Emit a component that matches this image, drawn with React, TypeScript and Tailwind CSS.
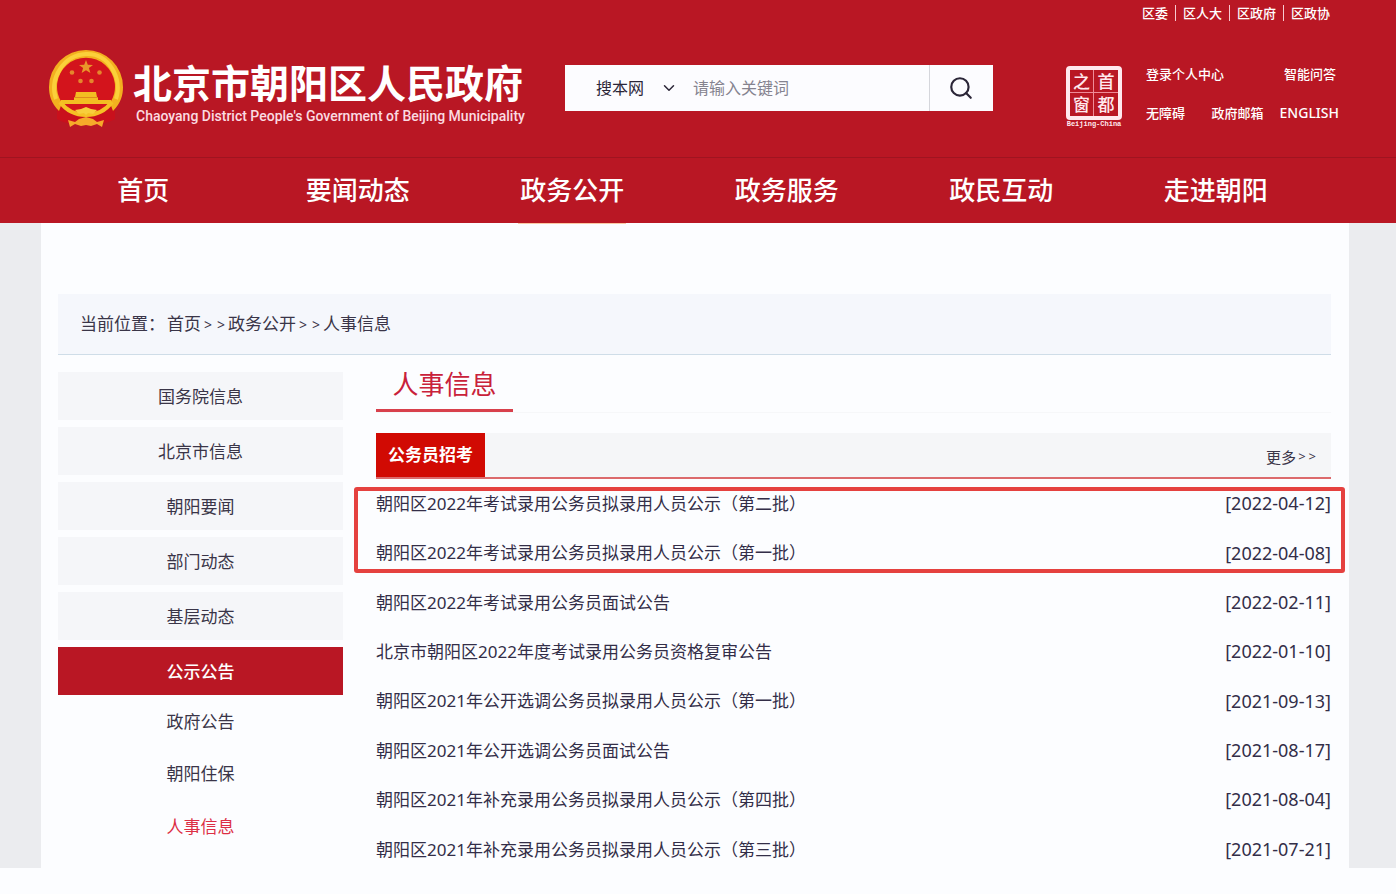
import React from "react";
import { ChevronDown, Search } from "lucide-react";

const topLinks = ["区委", "区人大", "区政府", "区政协"];
const navItems = ["首页", "要闻动态", "政务公开", "政务服务", "政民互动", "走进朝阳"];
const activeNav = "政务公开";
const sideItems = ["国务院信息", "北京市信息", "朝阳要闻", "部门动态", "基层动态", "公示公告"];
const activeSide = "公示公告";
const subItems = ["政府公告", "朝阳住保", "人事信息"];
const activeSub = "人事信息";

const notices = [
  { title: "朝阳区2022年考试录用公务员拟录用人员公示（第二批）", date: "2022-04-12" },
  { title: "朝阳区2022年考试录用公务员拟录用人员公示（第一批）", date: "2022-04-08" },
  { title: "朝阳区2022年考试录用公务员面试公告", date: "2022-02-11" },
  { title: "北京市朝阳区2022年度考试录用公务员资格复审公告", date: "2022-01-10" },
  { title: "朝阳区2021年公开选调公务员拟录用人员公示（第一批）", date: "2021-09-13" },
  { title: "朝阳区2021年公开选调公务员面试公告", date: "2021-08-17" },
  { title: "朝阳区2021年补充录用公务员拟录用人员公示（第四批）", date: "2021-08-04" },
  { title: "朝阳区2021年补充录用公务员拟录用人员公示（第三批）", date: "2021-07-21" },
];

function Emblem() {
  return (
    <svg viewBox="0 0 76 80" className="h-20 w-[76px] shrink-0" aria-hidden="true">
      <path d="M9 52h58v18q-8 5-16 4H25q-8 1-16-4z" fill="#c9101c" />
      <circle cx="38" cy="37" r="31" fill="#d3141c" />
      <path
        d="M11 62C3 54 1 46 1 38a37 37 0 0 1 74 0c0 8-2 16-10 24l-3-8a29 29 0 1 0-48 0z"
        fill="#f3b01f"
      />
      <path d="M8 50C1 30 15 6 38 5s37 25 30 45" fill="none" stroke="#fbd03a" strokeWidth="4" />
      <path
        d="m38 11 1.800 4.800 5.200.2-4.100 3.100 1.500 5-4.400-2.900-4.400 2.900 1.500-5-4.100-3.100 5.200-.2z"
        fill="#e9962a"
      />
      <g fill="#e5862c">
        <circle cx="24" cy="23.500" r="2.300" />
        <circle cx="51.500" cy="23.500" r="2.300" />
        <circle cx="32.500" cy="32" r="2.300" />
        <circle cx="43.500" cy="32" r="2.300" />
      </g>
      <path d="M28 43h20l1 5h1v3h13v4H13v-4h13v-3h1z" fill="#f3bd22" />
      <path d="M26 48.500h24" stroke="#e08a1c" strokeWidth="1" />
      <path d="M12 53c6 8 14 13 26 13s20-5 26-13" fill="none" stroke="#f6bf25" strokeWidth="4" />
      <path d="m27 61 6-1 5-2 5 2 6 1-4 4-5-1-2 2-2-2-5 1z" fill="#f8ce3c" />
      <path
        d="m20 71 7 2 4-3 7-2 7 2 4 3 7-2-2 7-5-3-6 2-5-1-5 1-6-2-5 3z"
        fill="#f6a92a"
      />
    </svg>
  );
}

function CapitalSeal() {
  return (
    <a href="#seal" className="flex w-[58px] flex-col items-center text-[#ffe9ee]">
      <span className="grid h-[54px] w-[56px] grid-cols-2 grid-rows-2 rounded-[4px] border-4 border-[#ffe9ee] text-[17px] leading-none font-medium">
        <span className="flex items-center justify-center border-r border-b border-[#ef8b98]">之</span>
        <span className="flex items-center justify-center border-b border-[#ef8b98]">首</span>
        <span className="flex items-center justify-center border-r border-[#ef8b98]">窗</span>
        <span className="flex items-center justify-center">都</span>
      </span>
      <span className="font-['Liberation_Mono',monospace] text-[7px] leading-[8px] font-bold">Beijing-China</span>
    </a>
  );
}

function Header() {
  return (
    <header className="bg-[#b91724] text-white">
      <div className="flex h-[26px] justify-end pr-[66px] text-[13px] leading-[26px] font-medium">
        <div className="flex items-center">
          {topLinks.map((label, i) => (
            <React.Fragment key={label}>
              {i > 0 && <span className="mx-[7px] h-4 w-px bg-[#f7c9d0]" />}
              <a href="#dept">{label}</a>
            </React.Fragment>
          ))}
        </div>
      </div>

      <div className="flex h-[131px] items-start justify-between pr-[57px] pl-12">
        <div className="flex items-start gap-10">
          <a href="#home" className="flex pt-[23px]">
            <Emblem />
            <span className="ml-[9px] flex flex-col pt-[11px]">
              <span className="text-[39px] leading-[46px] font-bold whitespace-nowrap">北京市朝阳区人民政府</span>
              <span className="pl-[3px] font-[Roboto,sans-serif] text-[14px] leading-[20px] font-medium whitespace-nowrap text-[#fbdbe1]">
                Chaoyang District People's Government of Beijing Municipality
              </span>
            </span>
          </a>

          <form
            className="mt-[39px] flex h-[46px] w-[428px] shrink-0 bg-[#fcfcff] text-[#2b2638]"
            onSubmit={(e) => e.preventDefault()}
          >
            <div className="relative flex items-center">
              <select
                aria-label="搜索范围"
                className="h-full w-[128px] appearance-none bg-transparent pl-[31px] text-[16px] outline-none"
              >
                <option>搜本网</option>
              </select>
              <ChevronDown className="pointer-events-none absolute right-[15px] size-[18px]" strokeWidth={2} />
            </div>
            <input
              type="text"
              aria-label="关键词"
              placeholder="请输入关键词"
              className="min-w-0 flex-1 bg-transparent text-[16px] outline-none placeholder:text-[#85838f]"
            />
            <button
              type="submit"
              aria-label="搜索"
              className="flex w-16 items-center justify-center border-l border-[#d5d6dc]"
            >
              <Search className="size-[26px]" strokeWidth={2} />
            </button>
          </form>
        </div>

        <div className="flex items-start gap-[23px] pt-10">
          <CapitalSeal />
          <div className="-mt-0.5 flex w-[193px] flex-col gap-[19px] text-[13px] leading-5 font-medium">
            <div className="flex justify-between pr-[3px]">
              <a href="#login">登录个人中心</a>
              <a href="#qa">智能问答</a>
            </div>
            <div className="flex justify-between">
              <a href="#accessible">无障碍</a>
              <span className="flex gap-4">
                <a href="#mail">政府邮箱</a>
                <a href="#english" className="font-['Noto_Sans',sans-serif] text-[14px]">ENGLISH</a>
              </span>
            </div>
          </div>
        </div>
      </div>

      <nav className="grid h-[66px] grid-cols-6 border-t border-[#9f1420] pr-[73px] pl-9 text-[26px] font-medium">
        {navItems.map((label) => (
          <a key={label} href="#nav" className="relative flex items-center justify-center">
            {label}
            {label === activeNav && (
              <span className="absolute -bottom-px h-px w-[108px] bg-[#fbc9a4]" />
            )}
          </a>
        ))}
      </nav>
    </header>
  );
}

function Arrows() {
  return (
    <span className="flex gap-[5px] px-[3px] text-[14px]">
      <span>&gt;</span>
      <span>&gt;</span>
    </span>
  );
}

function Sidebar() {
  return (
    <aside className="w-[285px] shrink-0 text-center text-[17px]">
      <ul className="flex flex-col gap-[7px]">
        {sideItems.map((label) => (
          <li key={label}>
            <a
              href="#side"
              className={
                label === activeSide
                  ? "block h-12 bg-[#b91724] leading-[50px] font-medium text-white"
                  : "block h-12 bg-[#f5f6f9] leading-[50px] text-[#3a3548]"
              }
            >
              {label}
            </a>
          </li>
        ))}
      </ul>
      <ul className="grid h-[158px] auto-rows-fr">
        {subItems.map((label) => (
          <li key={label} className="flex items-center justify-center">
            <a href="#sub" className={label === activeSub ? "text-[#dc2f45]" : "text-[#3a3548]"}>
              {label}
            </a>
          </li>
        ))}
      </ul>
    </aside>
  );
}

function NoticePanel() {
  return (
    <section className="-mb-1.5 min-w-0 flex-1">
      <div className="flex border-b border-[#f6f7f9]">
        <h1 className="h-10 w-[137px] border-b-[3px] border-[#d8404c] text-center text-[26px] leading-[24px] text-[#c9213a]">
          人事信息
        </h1>
      </div>
      <div className="mt-5 flex h-[46px] items-stretch justify-between border-b-2 border-[#dc6a6c] bg-[#f5f6f8]">
        <h2 className="w-[109px] bg-[#d10a03] text-center text-[17px] leading-[44px] font-bold text-white">
          公务员招考
        </h2>
        <a href="#more" className="flex items-center pt-1 pr-[15px] text-[15px] text-[#3a3548]">
          更多
          <span className="flex gap-[3px] pl-0.5 text-[13px]">
            <span>&gt;</span>
            <span>&gt;</span>
          </span>
        </a>
      </div>
      <div className="relative">
        <ul className="grid h-[395px] auto-rows-fr text-[17px] text-[#332e48]">
          {notices.map((n) => (
            <li key={n.title} className="flex items-center justify-between gap-6">
              <a href="#notice">{n.title}</a>
              <time dateTime={n.date} className="text-[18px] whitespace-nowrap">[{n.date}]</time>
            </li>
          ))}
        </ul>
        <span className="pointer-events-none absolute top-[8px] -right-[14px] -left-[22px] h-[86px] rounded-[3px] border-4 border-[#e5413f]" />
      </div>
    </section>
  );
}

export default function App() {
  return (
    <div className="min-h-screen bg-[#fcfdff] font-['Noto_Sans','Noto_Sans_CJK_SC',sans-serif]">
      <Header />
      <div className="bg-[#ebecef] pr-[47px] pl-[41px]">
        <main className="bg-[#fcfdff] pt-[71px] pr-[18px] pl-[17px]">
          <div className="flex h-[61px] items-center border-b border-[#cfdde8] bg-[#f5f7fc] pl-[22px] text-[17px] text-[#3a3548]">
            <span className="pr-0.5">当前位置：</span>
            <a href="#home">首页</a>
            <Arrows />
            <a href="#open">政务公开</a>
            <Arrows />
            <a href="#hr">人事信息</a>
          </div>
          <div className="flex gap-[33px] pt-[17px]">
            <Sidebar />
            <NoticePanel />
          </div>
        </main>
      </div>
    </div>
  );
}
